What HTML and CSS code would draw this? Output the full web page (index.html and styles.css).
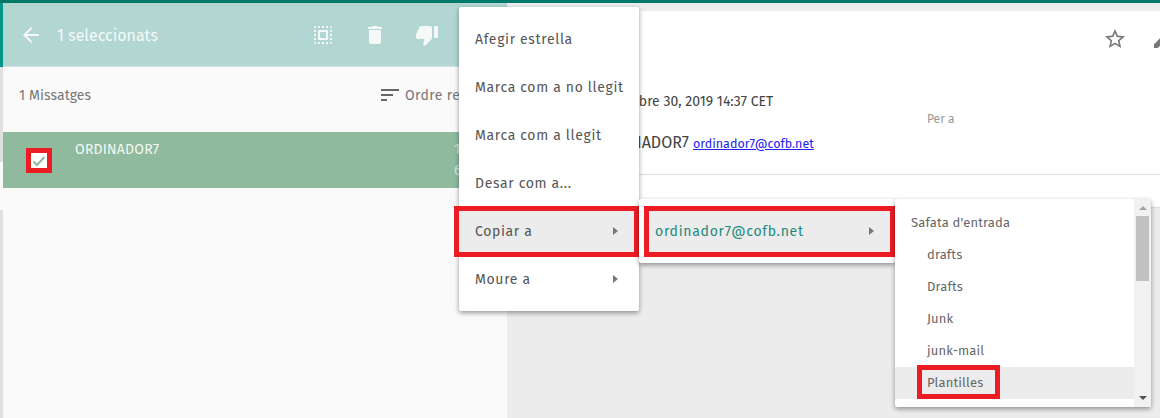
FILE: index.html
```html
<!DOCTYPE html>
<html lang="en">
<head>
  <meta charset="UTF-8">
  <title>Correu</title>
  <link rel="stylesheet" href="styles.css">
</head>
<body>
  <div class="app">
    <div class="rail">
      <div class="rail-top"></div>
      <div class="rail-mid"></div>
      <div class="rail-gap"></div>
    </div>

    <div class="list-pane">
      <div class="select-bar">
        <svg class="back-icon" width="24" height="24" viewBox="0 0 24 24"><path d="M20 11H7.8l5.6-5.6L12 4l-8 8 8 8 1.4-1.4L7.8 13H20z"/></svg>
        <span class="select-count">1 seleccionats</span>
        <div class="select-actions">
          <svg width="24" height="24" viewBox="0 0 24 24"><path d="M3 5h2V3a2 2 0 0 0-2 2zm0 8h2v-2H3zm4 8h2v-2H7zM3 9h2V7H3zm10-6h-2v2h2zm6 0v2h2a2 2 0 0 0-2-2zM5 21v-2H3a2 2 0 0 0 2 2zm-2-4h2v-2H3zM9 3H7v2h2zm2 18h2v-2h-2zm8-8h2v-2h-2zm0 8a2 2 0 0 0 2-2h-2zm0-12h2V7h-2zm0 8h2v-2h-2zm-4 4h2v-2h-2zm0-16h2V3h-2zM7 17h10V7H7zm2-8h6v6H9z"/></svg>
          <svg width="24" height="24" viewBox="0 0 24 24"><path d="M6 19a2 2 0 0 0 2 2h8a2 2 0 0 0 2-2V7H6zM19 4h-3.5l-1-1h-5l-1 1H5v2h14z"/></svg>
          <svg width="24" height="24" viewBox="0 0 24 24"><path d="M15 3H6c-.8 0-1.5.5-1.8 1.2l-3 7.1c-.1.2-.2.5-.2.7v2c0 1.1.9 2 2 2h6.3l-1 4.6v.3c0 .4.2.8.4 1.1l1.1 1 6.6-6.6c.4-.4.6-.9.6-1.4V5c0-1.1-.9-2-2-2zm4 0v12h4V3z"/></svg>
        </div>
      </div>
      <div class="list-head">
        <span>1 Missatges</span>
        <div class="sort">
          <svg width="24" height="24" viewBox="0 0 24 24"><path d="M3 18h6v-2H3zM3 6v2h18V6zm0 7h12v-2H3z"/></svg>
          <span>Ordre rebut</span>
        </div>
      </div>
      <div class="msg-row">
        <div class="msg-check">
          <svg width="16" height="16" viewBox="0 0 16 16"><path d="M2.5 8.5l3.5 3.5 7.5-8" fill="none" stroke="#8fba9e" stroke-width="2"/></svg>
        </div>
        <span class="msg-from">ORDINADOR7</span>
        <div class="msg-date">
          <span>13:37</span>
          <span>6 kB</span>
        </div>
      </div>
    </div>

    <div class="read-pane">
      <div class="read-card">
        <div class="read-head">
          <div class="read-tools">
            <svg width="24" height="24" viewBox="0 0 24 24"><path d="M22 9.2l-7.2-.6L12 2 9.2 8.6 2 9.2l5.5 4.7L5.8 21l6.2-3.7 6.2 3.7-1.6-7.1zM12 15.4l-3.8 2.3 1-4.3-3.3-2.9 4.4-.4L12 6.1l1.7 4 4.4.4-3.3 2.9 1 4.3z"/></svg>
            <svg width="24" height="24" viewBox="0 0 24 24"><path d="M3 17.2V21h3.8L17.8 10l-3.8-3.8zM20.7 7c.4-.4.4-1 0-1.4l-2.3-2.3c-.4-.4-1-.4-1.4 0l-1.8 1.8 3.8 3.8z"/></svg>
          </div>
          <div class="read-date">Desembre 30, 2019 14:37 CET</div>
          <div class="read-to">Per a</div>
          <div class="read-from">ORDINADOR7 <a href="#">ordinador7@cofb.net</a></div>
        </div>
      </div>
    </div>
  </div>

  <div class="menu main-menu">
    <div class="menu-item">Afegir estrella</div>
    <div class="menu-item">Marca com a no llegit</div>
    <div class="menu-item">Marca com a llegit</div>
    <div class="menu-item">Desar com a...</div>
    <div class="menu-item active marked">Copiar a<i class="arrow"></i></div>
    <div class="menu-item">Moure a<i class="arrow"></i></div>
  </div>

  <div class="menu account-menu">
    <div class="menu-item active marked account">ordinador7@cofb.net<i class="arrow"></i></div>
  </div>

  <div class="menu folder-menu">
    <div class="folders">
      <div class="folder">Safata d'entrada</div>
      <div class="folder sub">drafts</div>
      <div class="folder sub">Drafts</div>
      <div class="folder sub">Junk</div>
      <div class="folder sub">junk-mail</div>
      <div class="folder sub hover">Plantilles</div>
    </div>
    <div class="scrollbar">
      <i class="scroll-up"></i>
      <div class="scroll-thumb"></div>
      <i class="scroll-down"></i>
    </div>
  </div>
</body>
</html>
```

FILE: styles.css
```css
*, *::after {
  box-sizing: border-box;
}

html, body {
  margin: 0;
  height: 100%;
  overflow: hidden;
}

body {
  position: relative;
  background-color: #ececec;
  border-top: 3px solid #00796b;
  font-family: "Fira Sans", "Noto Sans", "Open Sans", sans-serif;
  color: #555;
}

.app {
  display: flex;
  height: 100%;
}

.rail {
  width: 3px;
  background-color: #e0e0e0;
}

.rail-top {
  height: 64px;
  background-color: #009688;
}

.rail-mid {
  height: 95px;
}

.rail-gap {
  height: 48px;
  background-color: #fafafa;
}

.list-pane {
  width: 504px;
  background-color: #fafafa;
}

.select-bar {
  display: flex;
  align-items: center;
  height: 64px;
  padding-left: 16px;
  background-color: #b2d6d2;
  border-bottom: 1px solid #cfe3e1;
  color: #f4f9f8;
  fill: #f4f9f8;
  font-size: 16px;
}

.back-icon {
  margin-right: 14px;
}

.select-count {
  margin-top: 2px;
}

.select-actions {
  display: flex;
  gap: 28px;
  margin-left: auto;
  padding-right: 68px;
}

.list-head {
  display: flex;
  justify-content: space-between;
  align-items: center;
  height: 65px;
  padding: 0 0 9px 16px;
  font-size: 14px;
  letter-spacing: 0.1px;
  color: #777;
}

.sort {
  display: flex;
  align-items: center;
  gap: 3px;
  width: 129px;
  fill: #666;
  letter-spacing: 0.4px;
  white-space: nowrap;
  overflow: hidden;
}

.msg-row {
  display: flex;
  height: 56px;
  background-color: #8fba9e;
  color: #f2f8f4;
  font-size: 14px;
  letter-spacing: 0.2px;
}

.msg-check {
  display: flex;
  align-items: center;
  justify-content: center;
  width: 26px;
  height: 25px;
  margin: 16px 0 0 23px;
  background-color: #fff;
  border: 5px solid #ed1c24;
}

.msg-from {
  margin: 9px 0 0 23px;
}

.msg-date {
  display: flex;
  flex-direction: column;
  gap: 4px;
  margin: 9px 0 0 auto;
  width: 53px;
  color: #cfe9e6;
  white-space: nowrap;
  overflow: hidden;
}

.read-pane {
  flex: 1;
  padding-top: 8px;
  min-width: 0;
}

.read-card {
  height: 197px;
  background-color: #fff;
  border-bottom: 1px solid #ddd;
  color: #444;
}

.read-head {
  position: relative;
  height: 164px;
  border-bottom: 1px solid #ddd;
}

.read-tools {
  display: flex;
  gap: 24px;
  position: absolute;
  top: 16px;
  left: 596px;
  fill: #777;
}

.read-date {
  position: absolute;
  top: 82px;
  left: 89px;
  font-size: 14px;
}

.read-to {
  position: absolute;
  top: 101px;
  left: 420px;
  font-size: 12px;
  color: #999;
}

.read-from {
  position: absolute;
  top: 122px;
  left: 88px;
  font-size: 16px;
}

.read-from a {
  font-size: 12.5px;
  color: #2222ee;
}

.menu {
  position: absolute;
  background-color: #fff;
  border-radius: 2px;
  box-shadow: 0 2px 5px rgba(0, 0, 0, 0.4);
}

.main-menu {
  top: 4px;
  left: 459px;
  width: 180px;
  height: 304px;
  padding-top: 8px;
}

.menu-item {
  display: flex;
  align-items: center;
  height: 48px;
  padding: 0 21px 0 16px;
  font-size: 14px;
  letter-spacing: 0.65px;
  white-space: nowrap;
  color: #555;
}

.menu-item.active {
  background-color: #ececec;
}

.marked {
  position: relative;
}

.marked::after {
  content: "";
  position: absolute;
  top: -1px;
  right: 0;
  bottom: -2px;
  left: -5px;
  border: 5px solid #ed1c24;
}

.arrow {
  margin-left: auto;
  border-left: 5px solid #777;
  border-top: 4.5px solid transparent;
  border-bottom: 4.5px solid transparent;
}

.account-menu {
  top: 196px;
  left: 639px;
  width: 256px;
  height: 64px;
  padding-top: 8px;
}

.menu-item.account {
  margin-left: 10px;
  padding-left: 6px;
  color: #1f8a7d;
  letter-spacing: 0.71px;
}

.folder-menu {
  display: flex;
  top: 196px;
  left: 895px;
  width: 256px;
  height: 208px;
}

.folders {
  flex: 1;
  padding-top: 8px;
}

.folder {
  display: flex;
  align-items: center;
  height: 32px;
  padding: 0 0 2px 16px;
  font-size: 13px;
  letter-spacing: 0.15px;
  color: #666;
}

.folder.sub {
  padding-left: 32px;
}

.folder.hover {
  position: relative;
  background-color: #ececec;
}

.folder.hover::after {
  content: "";
  position: absolute;
  top: -2px;
  left: 22px;
  width: 83px;
  height: 34px;
  border: 5px solid #ed1c24;
}

.scrollbar {
  display: flex;
  flex-direction: column;
  align-items: center;
  width: 17px;
  background-color: #f1f1f1;
}

.scroll-up {
  margin: 7px 0 6px;
  border-left: 4px solid transparent;
  border-right: 4px solid transparent;
  border-bottom: 4px solid #a3a3a3;
}

.scroll-thumb {
  width: 13px;
  height: 65px;
  background-color: #c1c1c1;
}

.scroll-down {
  margin: auto 0 7px;
  border-left: 4px solid transparent;
  border-right: 4px solid transparent;
  border-top: 4px solid #505050;
}
```
